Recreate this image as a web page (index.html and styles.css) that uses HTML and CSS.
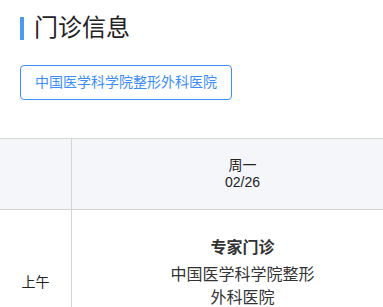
FILE: index.html
```html
<!DOCTYPE html>
<html lang="zh-CN">
<head>
    <meta charset="UTF-8">
    <meta name="viewport" content="width=device-width, initial-scale=1.0">
    <title>门诊信息</title>
    <link rel="stylesheet" href="styles.css">
</head>
<body>
    <div class="header">
        <h1 class="title"><span class="bar"></span>门诊信息</h1>
        <button class="hospital-btn">中国医学科学院整形外科医院</button>
    </div>

    <div class="schedule">
        <table class="schedule-table">
            <thead>
                <tr>
                    <th class="col-time"></th>
                    <th>周一<br>02/26</th>
                </tr>
            </thead>
            <tbody>
                <tr>
                    <td class="col-time">上午</td>
                    <td class="cell-clinic">
                        <div class="clinic">
                            <div class="clinic-type">专家门诊</div>
                            <div class="clinic-place">中国医学科学院整形外科医院</div>
                        </div>
                    </td>
                </tr>
            </tbody>
        </table>
    </div>
</body>
</html>
```

FILE: styles.css
```css
body {
    font-family: "Liberation Sans", "Noto Sans CJK SC", sans-serif;
    margin: 0;
    background-color: #fff;
    color: #333;
    overflow: hidden;
}

.header {
    padding: 12px 20px 0;
}

.title {
    display: flex;
    align-items: center;
    margin: 0;
    font-size: 24px;
    font-weight: normal;
    line-height: 32px;
    color: #222;
}

.title .bar {
    width: 4px;
    height: 23px;
    margin-right: 10px;
    background-color: #4a9af0;
}

.hospital-btn {
    margin-top: 21px;
    padding: 7px 14px;
    font-family: inherit;
    font-size: 14px;
    line-height: 19px;
    color: #3e8ef7;
    background-color: #fff;
    border: 1px solid #3e8ef7;
    border-radius: 4px;
}

.schedule {
    margin-top: 38px;
    width: 413px;
}

.schedule-table {
    width: 100%;
    border-collapse: collapse;
    table-layout: fixed;
}

.schedule-table th,
.schedule-table td {
    border-top: 1px solid #d4d4d4;
    border-left: 1px solid #d4d4d4;
    text-align: center;
    font-weight: normal;
}

.schedule-table th:first-child,
.schedule-table td:first-child {
    border-left: none;
}

.schedule-table th {
    height: 70px;
    padding: 0;
    font-size: 14px;
    line-height: 17px;
    color: #222;
    background-color: #f5f6fa;
}

.col-time {
    width: 71px;
}

.schedule-table td {
    height: 116px;
    padding: 0;
    font-size: 14px;
    color: #222;
}

.schedule-table td.cell-clinic {
    vertical-align: top;
    padding-top: 26px;
}

.clinic {
    width: 150px;
    margin: 0 auto;
}

.clinic-type {
    font-size: 16px;
    font-weight: bold;
    line-height: 24px;
    color: #333;
    margin-bottom: 3px;
}

.clinic-place {
    font-size: 16px;
    line-height: 23px;
    color: #333;
}
```
